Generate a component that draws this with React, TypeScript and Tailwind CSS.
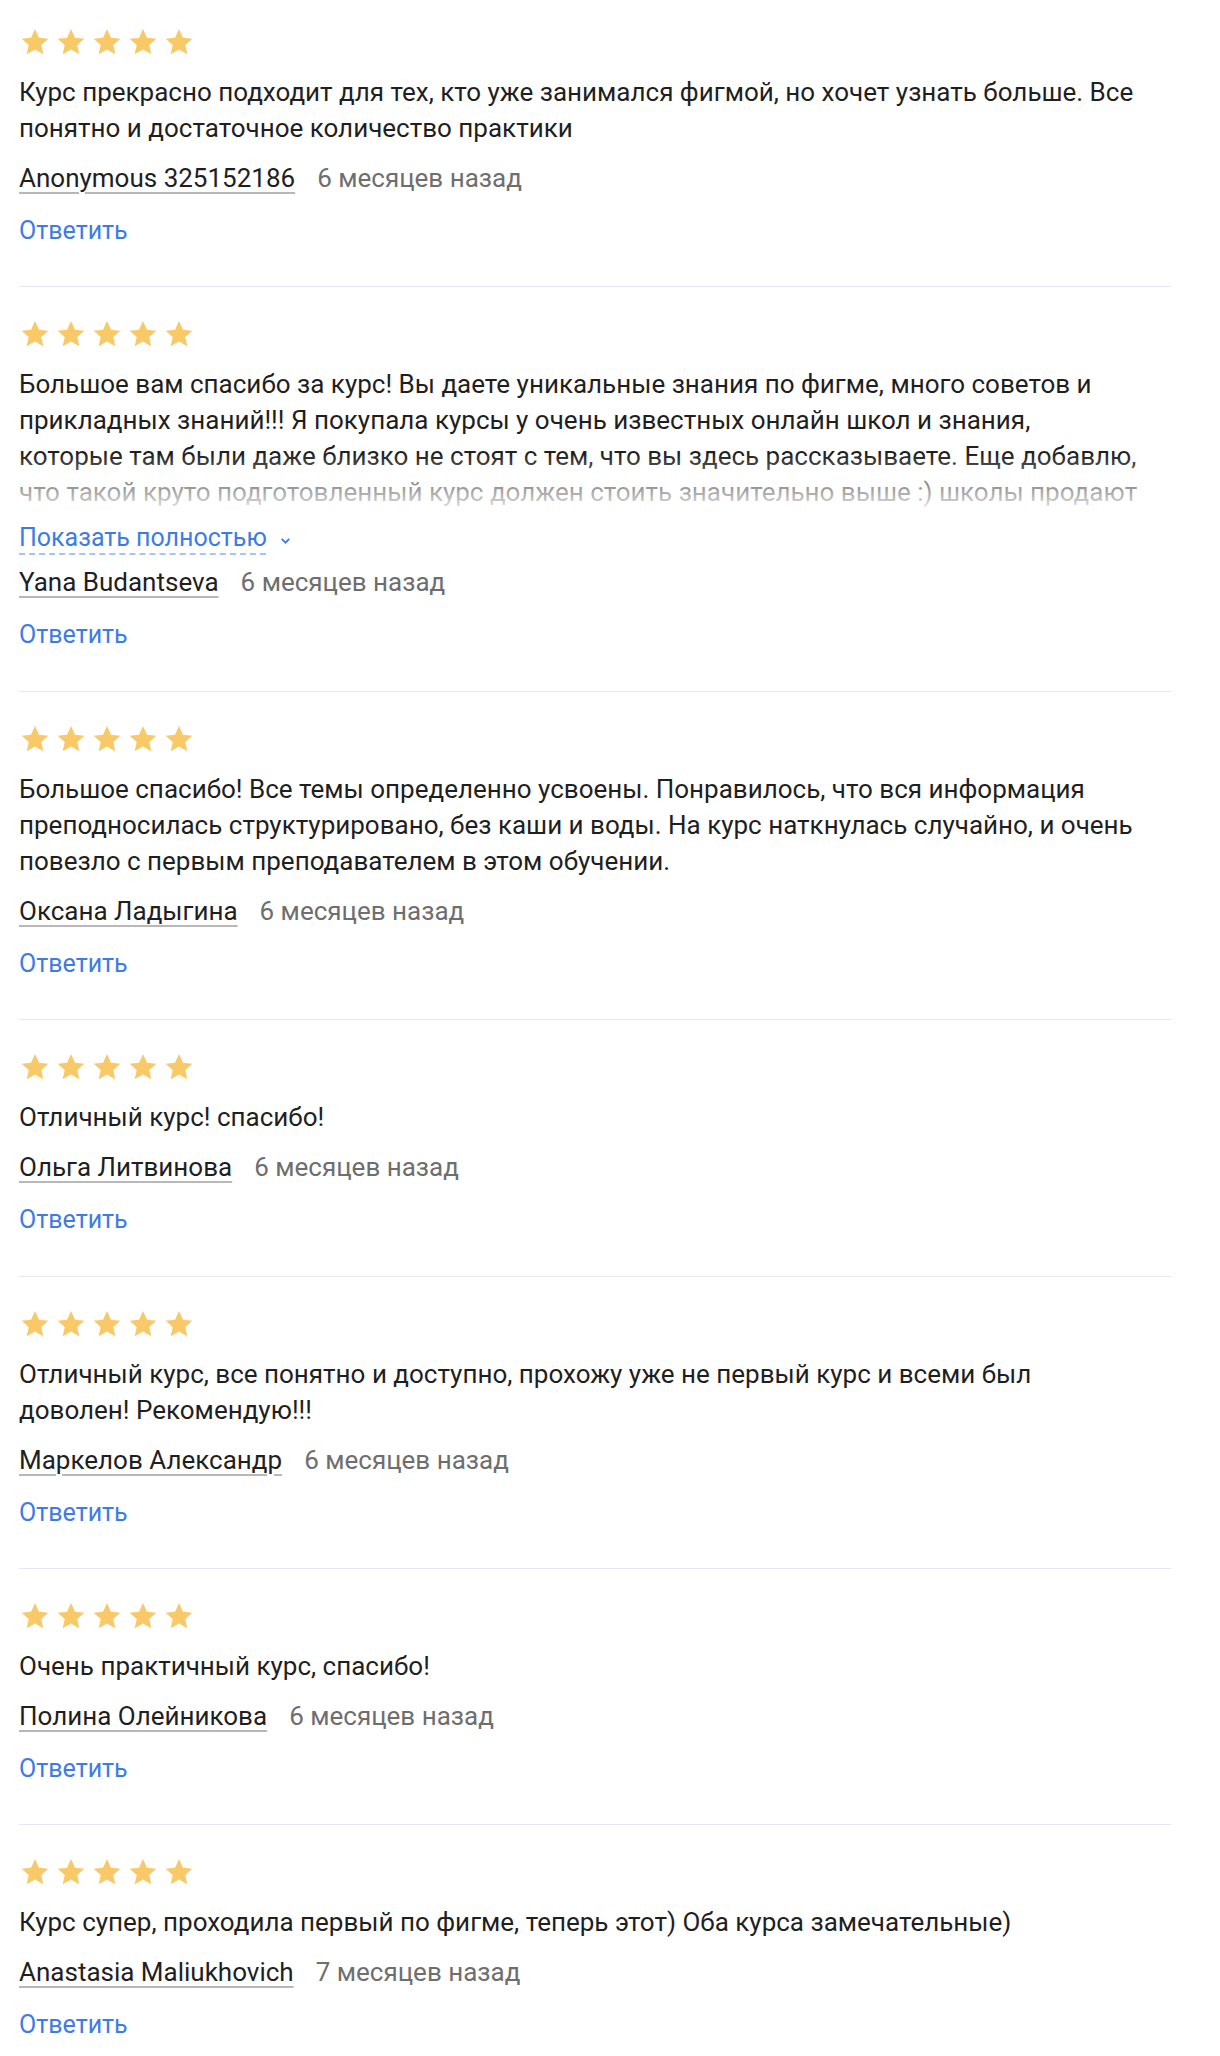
import React from "react";

type Review = {
  text: string;
  author: string;
  date: string;
  collapsed?: boolean;
};

const reviews: Review[] = [
  {
    text: "Курс прекрасно подходит для тех, кто уже занимался фигмой, но хочет узнать больше. Все понятно и достаточное количество практики",
    author: "Anonymous 325152186",
    date: "6 месяцев назад",
  },
  {
    text: "Большое вам спасибо за курс! Вы даете уникальные знания по фигме, много советов и прикладных знаний!!! Я покупала курсы у очень известных онлайн школ и знания, которые там были даже близко не стоят с тем, что вы здесь рассказываете. Еще добавлю, что такой круто подготовленный курс должен стоить значительно выше :) школы продают свои курсы в разы дороже, а знаний там гораздо меньше. Спасибо!!!",
    author: "Yana Budantseva",
    date: "6 месяцев назад",
    collapsed: true,
  },
  {
    text: "Большое спасибо! Все темы определенно усвоены. Понравилось, что вся информация преподносилась структурировано, без каши и воды. На курс наткнулась случайно, и очень повезло с первым преподавателем в этом обучении.",
    author: "Оксана Ладыгина",
    date: "6 месяцев назад",
  },
  {
    text: "Отличный курс! спасибо!",
    author: "Ольга Литвинова",
    date: "6 месяцев назад",
  },
  {
    text: "Отличный курс, все понятно и доступно, прохожу уже не первый курс и всеми был доволен! Рекомендую!!!",
    author: "Маркелов Александр",
    date: "6 месяцев назад",
  },
  {
    text: "Очень практичный курс, спасибо!",
    author: "Полина Олейникова",
    date: "6 месяцев назад",
  },
  {
    text: "Курс супер, проходила первый по фигме, теперь этот) Оба курса замечательные)",
    author: "Anastasia Maliukhovich",
    date: "7 месяцев назад",
  },
];

function Stars() {
  return (
    <div className="flex h-8 gap-1">
      {[0, 1, 2, 3, 4].map((i) => (
        <svg key={i} viewBox="0 0 24 24" className="h-8 w-8" fill="#f9c867">
          <path d="M12 2.2l2.95 6.55 7.05.72-5.3 4.78 1.52 6.95L12 17.6l-6.22 3.6 1.52-6.95L2 9.47l7.05-.72z" />
        </svg>
      ))}
    </div>
  );
}

function ReviewItem({ review, first, last }: { review: Review; first: boolean; last: boolean }) {
  return (
    <div
      className={`${first ? "pt-[26px]" : "pt-[31px]"} ${
        last ? "" : "pb-[37.4px] border-b border-[#e7e7f3]"
      }`}
    >
      <Stars />

      {review.collapsed ? (
        <>
          {/* clipped text with fade */}
          <div className="relative mt-4 h-[150px] max-w-[1120px] overflow-hidden">
            <p className="text-[26px] leading-9 text-[#1f1f1f]">{review.text}</p>
            <div className="absolute inset-x-0 bottom-0 h-[62px] bg-gradient-to-b from-white/0 to-white" />
          </div>
          <div className="mt-1 flex items-center gap-3 text-[25px] leading-9 text-[#3d7be6]">
            <span className="underline decoration-dashed decoration-[#a9c4f1] decoration-[1.5px] underline-offset-[7px]">
              Показать полностью
            </span>
            <svg viewBox="0 0 12 12" className="mt-1 h-[13px] w-[13px]" fill="none" stroke="#3d7be6" strokeWidth="1.6">
              <polyline points="2.5,4.5 6,8 9.5,4.5" />
            </svg>
          </div>
        </>
      ) : (
        <p className="mt-4 max-w-[1120px] text-[26px] leading-9 text-[#1f1f1f]">{review.text}</p>
      )}

      <div
        className={`${review.collapsed ? "mt-2" : "mt-[14px]"} flex items-baseline gap-[22px] text-[26px] leading-9`}
      >
        <span className="text-[#1f1f1f] underline decoration-[#b8b8b8] decoration-2 underline-offset-[5px]">
          {review.author}
        </span>
        <span className="text-[#6e6e6e]">{review.date}</span>
      </div>

      <div className="mt-[17px] text-[25px] leading-9 text-[#3d7be6]">Ответить</div>
    </div>
  );
}

export default function App() {
  return (
    <div className="min-h-screen bg-white font-['Roboto',sans-serif]">
      <div className="ml-[19px] w-[1152px]">
        {reviews.map((review, index) => (
          <ReviewItem
            key={index}
            review={review}
            first={index === 0}
            last={index === reviews.length - 1}
          />
        ))}
      </div>
    </div>
  );
}
